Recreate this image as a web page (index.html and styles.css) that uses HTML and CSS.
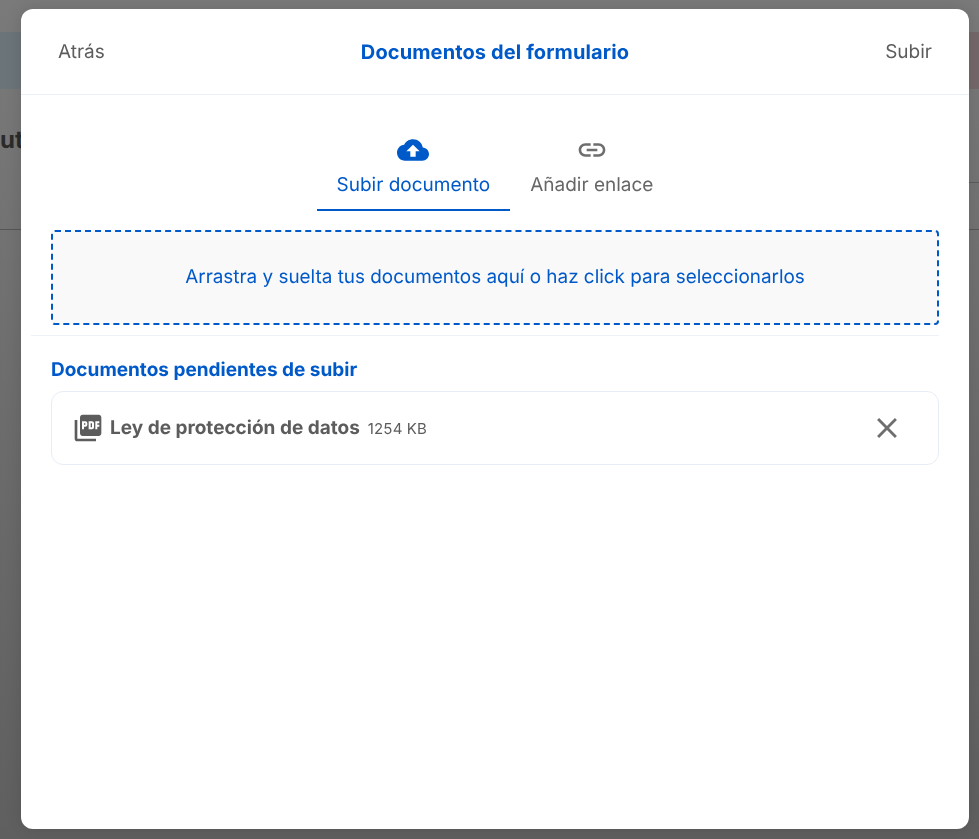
FILE: index.html
```html
<!DOCTYPE html>
<html lang="es">
<head>
<meta charset="utf-8">
<title>Documentos del formulario</title>
<link rel="stylesheet" href="styles.css">
</head>
<body>
<div class="page">
  <div class="page-top"></div>
  <div class="page-band"></div>
  <div class="page-title">ut</div>
  <div class="page-rule-right"></div>
  <div class="page-rule"></div>
</div>
<div class="modal">
  <header class="modal-head">
    <span class="head-action">Atrás</span>
    <h1 class="head-title">Documentos del formulario</h1>
    <span class="head-action">Subir</span>
  </header>
  <nav class="tabs">
    <div class="tab tab-active">
      <svg class="tab-icon" viewBox="0 0 24 24"><path d="M19.35 10.04C18.67 6.59 15.64 4 12 4 9.11 4 6.6 5.64 5.35 8.04 2.34 8.36 0 10.91 0 14c0 3.31 2.69 6 6 6h13c2.76 0 5-2.24 5-5 0-2.64-2.05-4.78-4.65-4.96zM14 13v4h-4v-4H7l5-5 5 5h-3z"/></svg>
      <span>Subir documento</span>
    </div>
    <div class="tab">
      <svg class="tab-icon" viewBox="0 0 24 24"><path d="M3.9 12c0-1.71 1.39-3.1 3.1-3.1h4V7H7c-2.76 0-5 2.24-5 5s2.24 5 5 5h4v-1.9H7c-1.71 0-3.1-1.39-3.1-3.1zM8 13h8v-2H8v2zm9-6h-4v1.9h4c1.71 0 3.1 1.39 3.1 3.1s-1.39 3.1-3.1 3.1h-4V17h4c2.76 0 5-2.24 5-5s-2.24-5-5-5z"/></svg>
      <span>Añadir enlace</span>
    </div>
  </nav>
  <div class="dropzone">Arrastra y suelta tus documentos aquí o haz click para seleccionarlos</div>
  <div class="divider"></div>
  <h2 class="section-title">Documentos pendientes de subir</h2>
  <div class="file-card">
    <svg class="file-icon" viewBox="0 0 24 24"><path d="M20 2H8c-1.1 0-2 .9-2 2v12c0 1.1.9 2 2 2h12c1.1 0 2-.9 2-2V4c0-1.1-.9-2-2-2zm-8.5 7.5c0 .83-.67 1.5-1.5 1.5H9v2H7.5V7H10c.83 0 1.5.67 1.5 1.5v1zm5 2c0 .83-.67 1.5-1.5 1.5h-2.5V7H15c.83 0 1.5.67 1.5 1.5v3zm4-3H19v1h1.5V11H19v2h-1.5V7h3v1.5zM9 9.5h1v-1H9v1zM4 6H2v14c0 1.1.9 2 2 2h14v-2H4V6zm10 5.5h1v-3h-1v3z"/></svg>
    <span class="file-name">Ley de protección de datos</span>
    <span class="file-size">1254 KB</span>
    <svg class="file-remove" viewBox="0 0 24 24"><path d="M19 6.41L17.59 5 12 10.59 6.41 5 5 6.41 10.59 12 5 17.59 6.41 19 12 13.41 17.59 19 19 17.59 13.41 12z"/></svg>
  </div>
</div>
</body>
</html>
```
FILE: styles.css
```css
* { box-sizing: border-box; }
html, body { margin: 0; height: 100%; }
body {
  height: 839px;
  overflow: hidden;
  font-family: Inter, "Liberation Sans", sans-serif;
  text-rendering: geometricPrecision;
  background: linear-gradient(180deg, #7a7a7a 0%, #6c6c6c 50%, #5f5f5f 100%);
}
.page { height: 839px; display: flex; flex-direction: column; }
.page-top { height: 32px; }
.page-band {
  height: 57px;
  background: linear-gradient(90deg, #6b7479 0%, #6e7075 50%, #75686a 100%);
}
.page-title {
  margin-top: 37px;
  height: 28px;
  line-height: 28px;
  font-size: 24px;
  font-weight: 700;
  color: #2b2b2b;
  white-space: nowrap;
}
.page-rule-right { margin-top: 28px; height: 1px; background: linear-gradient(90deg, transparent 969px, #5c5c5c 969px); }
.page-rule { margin-top: 46px; height: 1px; background: #555; }
.modal {
  position: absolute;
  left: 21px;
  top: 9px;
  width: 948px;
  height: 820px;
  background: #fff;
  border-radius: 12px;
  display: flex;
  flex-direction: column;
  box-shadow: 0 0 16px rgba(0, 0, 0, .12);
  will-change: transform;
}
.modal-head {
  height: 86px;
  padding: 0 37px;
  display: flex;
  align-items: center;
  justify-content: space-between;
  border-bottom: 1px solid #e9f0f8;
}
.head-action { font-size: 19px; color: #5c5c5c; }
.head-title { margin: 0; font-size: 20px; letter-spacing: .12px; font-weight: 700; color: #0059c8; }
.tabs { display: flex; justify-content: center; margin-top: 39px; }
.tab {
  display: flex;
  flex-direction: column;
  align-items: center;
  height: 77px;
  padding: 0 20px;
  font-size: 19px;
  line-height: 22px;
  color: #666;
}
.tab-icon { width: 32px; height: 32px; fill: #6e6e6e; margin-bottom: 8px; }
.tab-active { color: #0059c8; border-bottom: 2px solid #0059c8; }
.tab-active .tab-icon { fill: #0059c8; }
.dropzone {
  margin: 19px 30px 0;
  height: 95px;
  display: flex;
  align-items: center;
  justify-content: center;
  padding-bottom: 3px;
  background: #f9f9f9;
  border: 2px dashed #0059c8;
  border-radius: 4px;
  font-size: 18.9px;
  color: #0059c8;
}
.divider { margin: 10px 30px 0 10px; height: 1px; background: #eef2f8; }
.section-title {
  margin: 23px 30px 0;
  font-size: 19px;
  line-height: 22px;
  font-weight: 700;
  color: #0059c8;
}
.file-card {
  margin: 10px 30px 0;
  height: 74px;
  display: flex;
  align-items: center;
  padding: 0 34px 0 20px;
  border: 1px solid #e6edf7;
  border-radius: 12px;
}
.file-icon { width: 32px; height: 32px; fill: #5c5c5c; flex: none; }
.file-name { margin: 0 0 2px 6px; font-size: 19px; font-weight: 700; color: #5c5c5c; }
.file-size { margin-left: 8px; font-size: 15px; letter-spacing: .15px; color: #5c5c5c; }
.file-remove { width: 34px; height: 34px; fill: #6e6e6e; margin-left: auto; }
```
